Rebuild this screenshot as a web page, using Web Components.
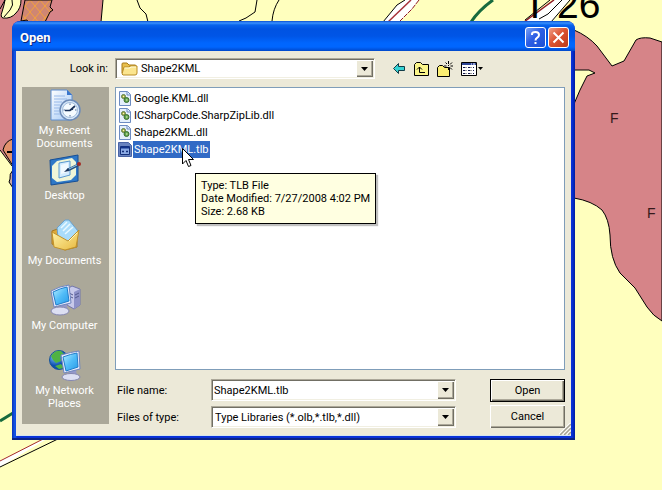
<!DOCTYPE html>
<html lang="en">
<head>
<meta charset="utf-8">
<title>Open</title>
<style>
html,body{height:100%}
body{margin:0;background:#ffffbe;color:#000;font:11px/13px Roboto,"Liberation Sans",sans-serif;overflow:hidden}
</style>
</head>
<body>
<map-desktop>
  <xp-dialog heading="Open"></xp-dialog>
</map-desktop>

<template id="map-desktop">
<style>
:host{display:block;position:relative;min-height:100%;box-sizing:border-box;padding:21px 87px 0 12px}
.map{position:absolute;left:0;top:0;z-index:-1}
</style>
<svg class="map" width="662" height="490" viewBox="0 0 662 490" fill="none" aria-hidden="true">
  <defs><pattern id="h" width="10" height="12" patternUnits="userSpaceOnUse"><path d="M0 0L10 12M10 0L0 12" stroke="#f2a03c"/></pattern></defs>
  <rect width="662" height="490" fill="#ffffbe"/>
  <path d="M0 0H103L101 21V60H13V166L0 150Z" fill="#d68488"/>
  <path d="M103 0L101 22M0 150L12 166" stroke="#000"/>
  <path d="M5 0Q4 6 2 12Q0 17 3 18Q11 19 16 13Q21 8 21 0" fill="#ffffbe" stroke="#000"/>
  <path d="M0 9L5 0M12 0Q14 5 10 10L4 17" stroke="#000"/>
  <path d="M25 0L21 21L27 20L28 22H45L50 12L53 10L50 7L52 0Z" fill="#cf8673"/>
  <path d="M25 0L21 21L27 20L28 22H45L50 12L53 10L50 7L52 0Z" fill="url(#h)" stroke="#000"/>
  <path d="M3 150Q5 141 13 139V166Z" fill="#e2926c" stroke="#000"/><path d="M7 152H13" stroke="#000" stroke-width="2"/>
  <path d="M13 170Q9 174 10 179L9 182L13 188" stroke="#000" fill="#c9a6a0"/>
  <path d="M0 421L13 413" stroke="#176b3e" stroke-width="3"/>
  <path d="M42 440L0 461V467L57 433Z" fill="#fff"/><path d="M47 437L0 461" stroke="#a52a2a"/><path d="M62 437L0 467" stroke="#000"/>
  <path d="M137 0L140 8L146 14L148 22M257 0L255 12L246 18L239 21M279 0Q273 9 272 21" stroke="#000"/>
  <path d="M405 0L397 5L383 22H400L412 9L419 0Z" fill="#fff"/>
  <path d="M405 0L397 5L383 22" stroke="#000"/><path d="M411 0L388 22" stroke="#a8323a" stroke-width="1.5"/><path d="M419 0L412 9L399 22" stroke="#8f1823" stroke-dasharray="5 1"/>
  <path d="M493 0Q479 10 471 22" stroke="#176b3e" stroke-width="3"/>
  <path d="M553 0L524 22H552L569 0Z" fill="#fff"/><path d="M554 0L524 22" stroke="#8f1823" stroke-width="1.5"/><path d="M550 0L525 20M562 0L548 14L539 19M570 0L551 22" stroke="#000"/>
  <path d="M574 30Q588 36 597 46L612 66L624 61L636 40Q640 37 650 38L662 42V321Q653 316 647 307L635 288L620 273Q610 259 610 235Q609 219 602 210Q592 201 574 198V104L580 90L587 76L595 73L589 70H574Z" fill="#d68488" stroke="#000"/>
  <g fill="#000" font-family="Liberation Sans,Arial,sans-serif"><text x="523" y="18" font-size="39">T 26</text><g font-size="14" fill="#35191b"><text x="610" y="123">F</text><text x="647" y="218">F</text></g></g>
</svg>
<slot></slot>
</template>

<template id="xp-dialog">
<style>
:host{display:block;border-radius:8px 8px 0 0;overflow:hidden;background:#0831d9;box-sizing:border-box}
header{height:30px;box-sizing:border-box;display:flex;align-items:center;gap:2px;padding:3px 6px 0 8px;border-radius:8px 8px 0 0;background:linear-gradient(#0a4ed0 0,#3a92ff 2px,#0864ec 4px,#0053e2 8px,#0055e6 15px,#0066fe 22px,#0066ff 26px,#0048ca 30px)}
h1{margin:0;flex:1;color:#fff;font:bold 13px/16px Roboto,"Liberation Sans",sans-serif;text-shadow:1px 1px #0b2a83}
header button{width:21px;height:21px;padding:0;border:1px solid #fff;border-radius:3px;background:linear-gradient(135deg,#7aa2f5,#2c5ee5 45%,#1c50d4);display:block}
header button.close{background:linear-gradient(135deg,#f0a088,#dc5433 45%,#bd3a18)}
header svg{display:block}
main{margin:0 4px;border-bottom:1px solid #d3e4ee;background:#ece9d8;padding:7px 6px;display:grid;grid-template-columns:87px minmax(0,1fr);gap:8px 6px}
.frame{padding-bottom:4px;background:linear-gradient(90deg,#0831b8 0,#1458e8 3px,#0831d9 5px,#0831d9 calc(100% - 3px),#001ea0);position:relative;box-shadow:inset 0 -2px #0a2386}
.look{justify-self:end;align-self:center;padding-right:1px}
.top{display:flex;gap:18px}
.top xp-combo{flex:1}
xp-toolbar{flex:0 0 172px}
xp-places{margin-bottom:4px}
.right{display:flex;flex-direction:column;gap:9px}
file-list{min-height:283px}
footer{display:flex;gap:34px}
.fields{flex:1;display:grid;grid-template-columns:94px minmax(0,1fr);grid-auto-rows:22px;gap:5px 0;align-items:center;padding-left:2px}
.fields xp-combo{height:22px}
.actions{display:grid;grid-template-columns:75px;grid-auto-rows:23px;gap:3px}
.actions button{font:11px/13px Roboto,"Liberation Sans",sans-serif;padding:0;color:#000;background:#ece9d8;border:0;box-shadow:inset 1px 1px #fff,inset -1px -1px #716f64,inset -2px -2px #aca899}
.actions button.default{border:1px solid #000}
.grip{position:absolute;right:4px;bottom:5px;display:block}
</style>
<header><h1></h1>
<button aria-label="Help"><svg width="19" height="19" fill="none" stroke="#fff" stroke-width="2"><path d="M6 7V6Q6 4 9.500 4Q13 4 13 7Q13 8.500 11 9.800Q9.500 10.800 9.500 12.500M9.500 14V16"/></svg></button>
<button class="close" aria-label="Close"><svg width="19" height="19" stroke="#fff" stroke-width="2"><path d="M4.500 4.500L14.500 14.500M14.500 4.500L4.500 14.500"/></svg></button></header>
<div class="frame"><main>
  <span class="look">Look in:</span>
  <div class="top"><xp-combo kind="select" label="Look in" value="Shape2KML"><svg slot="icon" width="18" height="16" viewBox="0 0 18 16"><path d="M2 12V3Q2 2 3 2H7L9 4H15Q16 4 16 5V12Z" fill="#e8bf4c" stroke="#a87b18"/><path d="M2 13L4 6H9L10 5H17V12Q17 14 15 14H3Z" fill="#fbe58e" stroke="#b98c25"/><path d="M4.500 7H10L11 6H16" stroke="#fffbd8" fill="none"/></svg></xp-combo><xp-toolbar></xp-toolbar></div>
  <xp-places></xp-places>
  <div class="right"><file-list></file-list>
    <footer><div class="fields"><span>File name:</span><xp-combo kind="input" label="File name" value="Shape2KML.tlb"></xp-combo><span>Files of type:</span><xp-combo kind="select" label="Files of type" value="Type Libraries (*.olb,*.tlb,*.dll)"></xp-combo></div>
    <div class="actions"><button class="default">Open</button><button>Cancel</button></div></footer>
  </div>
</main>
<svg class="grip" width="12" height="12" aria-hidden="true"><path d="M0 12L12 0M4 12L12 4M8 12L12 8" stroke="#fff" stroke-width="2"/><path d="M1 12L12 1M5 12L12 5M9 12L12 9" stroke="#a5a294" stroke-width="1.500"/></svg></div>
</template>

<template id="xp-combo">
<style>
:host{display:grid;height:21px;box-sizing:border-box;grid-template-columns:auto minmax(0,1fr) 17px;background:#fff;border:1px solid;border-color:#aca899 #fff #fff #aca899;box-shadow:inset 1px 1px #716f64,inset -1px -1px #f1efe2;align-items:center;padding:1px}
.control{grid-area:1/1/2/4;width:100%;height:100%;box-sizing:border-box;border:0;margin:0;padding:0 18px 0 1px;background:transparent;appearance:none;font:inherit;color:#000;outline:0}
select.control{padding-left:2px}
:host([icon]) .control{padding-left:24px}
.icon{grid-area:1/1;pointer-events:none;display:flex;padding-left:3px}
.arrow{grid-area:1/3;align-self:stretch;pointer-events:none;background:#ece9d8;box-shadow:inset 1px 1px #fff,inset -1px -1px #716f64,inset -2px -2px #aca899;display:grid;place-items:center}
</style>
<span class="icon"><slot name="icon"></slot></span>
<span class="arrow"><svg width="7" height="4" style="display:block"><path d="M0 0H7L3.500 4Z"/></svg></span>
</template>

<template id="xp-toolbar">
<style>
:host{display:flex;align-items:center;gap:8px}
button{border:0;padding:0;background:none;display:flex;align-items:center;gap:1px}
svg{display:block}
.back{margin-right:1px}
</style>
<button class="back" aria-label="Back"><svg width="12" height="11" viewBox="0 0 12 11"><path d="M.5 5.500L5.500 .5V3.500H11.500V7.500H5.500V10.500Z" fill="#36d3d3" stroke="#123c48"/></svg></button>
<button aria-label="Up one level"><svg width="15" height="14" viewBox="0 0 15 14"><path d="M.5 13.500V2.500L2.500 .5H6.500L8.500 2.500H14.500V13.500Z" fill="#fbf58a" stroke="#000"/><path d="M5.500 5V10.500H11M3 7.500L5.500 5L8 7.500" fill="none" stroke="#000"/></svg></button>
<button aria-label="New folder"><svg width="16" height="16" viewBox="0 0 16 16"><path d="M.5 15.500V6.500L2.500 4.500H5.500L7.500 6.500H12.500V15.500Z" fill="#fbee72" stroke="#000"/><path d="M11.500 0V3M11.500 7V9M7 5H9.500M13.500 5H16M8.500 1.500L10 3M13 6.500L15 8.500M15 1.500L13 3.500" stroke="#000"/><path d="M11 4.500H12" stroke="#000"/></svg></button>
<button aria-label="Views"><svg width="16" height="14" viewBox="0 0 16 14"><path d="M.5 .5H15.500V13.500H.5Z" fill="#fff" stroke="#000"/><path d="M1 1H15V3H1Z" fill="#2d4596"/><path d="M10 2H11M12 2H14" stroke="#fff"/><path d="M2 5.500H4M7 5.500H9M12 5.500H13M2 8.500H4M7 8.500H9M12 8.500H13M2 11.500H4M7 11.500H9M12 11.500H13" stroke="#10164e"/><path d="M4 5.500H6M9 5.500H11M4 8.500H6M9 8.500H11M4 11.500H6M9 11.500H11" stroke="#999"/></svg><svg width="5" height="3"><path d="M0 0H5L2.500 3Z"/></svg></button>
</template>

<template id="xp-places">
<style>
:host{display:flex;flex-direction:column;background:#aba899;color:#fff}
button{display:flex;flex-direction:column;align-items:center;gap:3px;height:65px;padding:2px 2px 0 0;border:0;background:none;color:#fff;font:inherit}
span{max-width:76px}
svg{display:block;flex:none}
</style>
<svg width="0" height="0" style="position:absolute"><defs>
<linearGradient id="sc" x2="1" y2="1"><stop stop-color="#b8efff"/><stop offset=".5" stop-color="#52bdf8"/><stop offset="1" stop-color="#269ae8"/></linearGradient>
<linearGradient id="pg" x2="1" y2="1"><stop stop-color="#fff"/><stop offset="1" stop-color="#9fc6f5"/></linearGradient>
<linearGradient id="fo" x2="1" y2="1"><stop stop-color="#fff5ad"/><stop offset="1" stop-color="#e8b83d"/></linearGradient>
<radialGradient id="gl" cx=".3" cy=".3"><stop stop-color="#8ad2ff"/><stop offset="1" stop-color="#0d4eaf"/></radialGradient></defs></svg>
<button><svg width="32" height="32"><path d="M2 1H18L23 6V31H2Z" fill="url(#pg)" stroke="#5f8ed0"/><path d="M18 1V6H23Z" fill="#3975cc"/><path d="M5 7H16M5 10H18M5 13H13M5 16H11M5 19H10M5 22H10M5 25H12" stroke="#98b9e9"/><circle cx="21" cy="21" r="10" fill="#d5e6f8" stroke="#6c8bb8" stroke-width="1.500"/><circle cx="21" cy="21" r="7.500" fill="#f5fbff" stroke="#a2bddd"/><path d="M16 21.500H21L26 17M21 21L24 20" stroke="#183058" stroke-width="1.700" fill="none"/><path d="M21 14.500V16M21 26V27.500M14.500 21H16M26 21H27.500" stroke="#4a6a96"/></svg><span>My Recent Documents</span></button>
<button><svg width="32" height="32"><path d="M1 6L29 1V27L2 31Z" fill="#2e78c8" stroke="#174f95" stroke-linejoin="round"/><path d="M8 7L23 4L27 8V21L22 26L8 28L3 24V12Z" fill="#eff5d8"/><path d="M10 9L21 7V21L10 24Z" fill="#d3ecff" stroke="#5898d0"/><path d="M12 11L19 9V18L12 20Z" fill="#f0f9ff"/><path d="M19 16L29 11" stroke="#254e7c" stroke-width="3"/><path d="M20 15L28 11" stroke="#8dc7ef"/><circle cx="30" cy="10" r="2" fill="#a22a24"/><path d="M15 18L19 14L20 17Z" fill="#14305a"/></svg><span>Desktop</span></button>
<button><svg width="32" height="32"><path d="M3 12L14 8L28 13V28L16 31L3 25Z" fill="#dca93b" stroke="#a87920"/><path d="M8 9L16 1L20 1L29 12L20 24L9 18Z" fill="#aadcfb" stroke="#6aa0cc"/><path d="M12 9L18 3M14 12L21 5M16 15L24 8" stroke="#e9f8ff" stroke-width="1.500"/><path d="M3 13L19 22L30 11L27 28L16 31L5 28Z" fill="url(#fo)" stroke="#c0912b" stroke-linejoin="round"/><path d="M20 22L28 14" stroke="#fff8c5"/></svg><span>My Documents</span></button>
<button><svg width="32" height="32"><path d="M18 5L23 2L31 5V21L25 25L18 21Z" fill="#c7c9ea" stroke="#7376ac"/><path d="M25 8L31 5V21L25 25Z" fill="#8d91c7"/><path d="M20 9L24 11M20 12L24 14M26 11L30 9M26 14L30 12" stroke="#54598e"/><path d="M11 20L17 19L19 26H11Z" fill="#9398c9"/><ellipse cx="11" cy="27" rx="9" ry="4" fill="#dcdff2" stroke="#8587b1"/><path d="M2 7Q11 2 20 1L22 19L5 23Z" fill="#e5e9fb" stroke="#6f84bd"/><path d="M4 8Q12 4 18 3L20 17L7 21Z" fill="url(#sc)" stroke="#227ecb"/></svg><span>My Computer</span></button>
<button><svg width="32" height="32"><circle cx="10" cy="11" r="9.500" fill="url(#gl)" stroke="#16549a"/><path d="M2 7Q6 1 12 2L15 5L11 8L12 12L7 14L4 11ZM6 17L12 15L15 19L10 20Z" fill="#50b343"/><path d="M20 22L27 21L28 28H21Z" fill="#9398c9"/><ellipse cx="22" cy="28" rx="9" ry="3.500" fill="#dcdff2" stroke="#8587b1"/><path d="M12 6Q22 3 30 2L31 20L15 24Z" fill="#e5e9fb" stroke="#6f84bd"/><path d="M14 8Q22 5 28 4L29 18L17 22Z" fill="url(#sc)" stroke="#227ecb"/></svg><span>My Network Places</span></button>
</template>

<template id="file-list">
<style>
:host{display:block;position:relative;box-sizing:border-box;background:#fff;border:1px solid #7f9db9;padding:2px}
ul{margin:0;padding:0;list-style:none}
li{display:flex;align-items:center;gap:1px;height:17px}
li span{padding:2px 1px}
li[aria-selected=true] span{background:#316ac5;color:#fff}
svg{display:block}
.cursor{position:absolute;left:66px;top:60px;z-index:2}
.tip{position:absolute;left:79px;top:85px;border:1px solid #000;background:#ffffe1;padding:5px;box-shadow:2px 2px 1px #8888;white-space:nowrap}
</style>
<ul role="listbox" aria-label="Files"></ul>
<svg class="cursor" width="12" height="20" aria-hidden="true"><path d="M.5 .5V16L4 12.500L6.500 18.500L9 17.500L6.500 11.500H11.500Z" fill="#fff" stroke="#000"/></svg>
<div class="tip" role="tooltip">Type: TLB File<br>Date Modified: 7/27/2008 4:02 PM<br>Size: 2.68 KB</div>
</template>

<script>
const stamp = (host, id) => {
  const root = host.attachShadow({mode: 'open'});
  root.append(document.getElementById(id).content.cloneNode(true));
  return root;
};
customElements.define('xp-combo', class extends HTMLElement {
  connectedCallback() {
    if (this.shadowRoot) return;
    const root = stamp(this, 'xp-combo');
    this.toggleAttribute('icon', !!this.querySelector('[slot=icon]'));
    const value = this.getAttribute('value');
    const control = document.createElement(this.getAttribute('kind'));
    control.className = 'control';
    control.setAttribute('aria-label', this.getAttribute('label'));
    if (control.localName === 'select') control.append(new Option(value));
    else control.value = value;
    root.insertBefore(control, root.querySelector('.icon'));
  }
});
customElements.define('xp-toolbar', class extends HTMLElement {
  connectedCallback() { if (!this.shadowRoot) stamp(this, 'xp-toolbar'); }
});
customElements.define('xp-places', class extends HTMLElement {
  connectedCallback() { if (!this.shadowRoot) stamp(this, 'xp-places'); }
});
customElements.define('file-list', class extends HTMLElement {
  connectedCallback() {
    if (this.shadowRoot) return;
    const root = stamp(this, 'file-list');
    const dll = '<svg width="14" height="16"><path d="M1.500 .5H9.500L12.500 3.500V14.500H1.500Z" fill="#e4effc" stroke="#6c8bc1"/><path d="M9 1V4H12" fill="none" stroke="#6c8bc1"/><circle cx="5.500" cy="5.500" r="2" fill="#a9b04a" stroke="#5d7f45"/><circle cx="8.500" cy="9" r="2.500" fill="#5fa64f" stroke="#3d6e30"/><path d="M5 5.500H6M8 9H9.500" stroke="#f5f3c4"/></svg>';
    const tlb = '<svg width="14" height="16"><path d="M.5 .5H10.500L13.500 3.500V14.500H.5Z" fill="#6983bf" stroke="#4a64a5"/><path d="M2.500 4.500H11.500V12.500H2.500Z" fill="#8cabe5" stroke="#142f78"/><path d="M3 5.500H11" stroke="#14348a" stroke-width="2"/><path d="M4 9.500H6M8 9.500H10M5 8.500V10.500M9 8.500V10.500" stroke="#142f78"/></svg>';
    root.querySelector('ul').innerHTML = ['Google.KML.dll', 'ICSharpCode.SharpZipLib.dll', 'Shape2KML.dll', 'Shape2KML.tlb']
      .map(n => `<li role="option" aria-selected="${n.endsWith('.tlb')}">${n.endsWith('.tlb') ? tlb : dll}<span>${n}</span></li>`).join('');
  }
});
customElements.define('xp-dialog', class extends HTMLElement {
  connectedCallback() {
    if (this.shadowRoot) return;
    stamp(this, 'xp-dialog').querySelector('h1').textContent = this.getAttribute('heading');
  }
});
customElements.define('map-desktop', class extends HTMLElement {
  connectedCallback() { if (!this.shadowRoot) stamp(this, 'map-desktop'); }
});
</script>
</body>
</html>
